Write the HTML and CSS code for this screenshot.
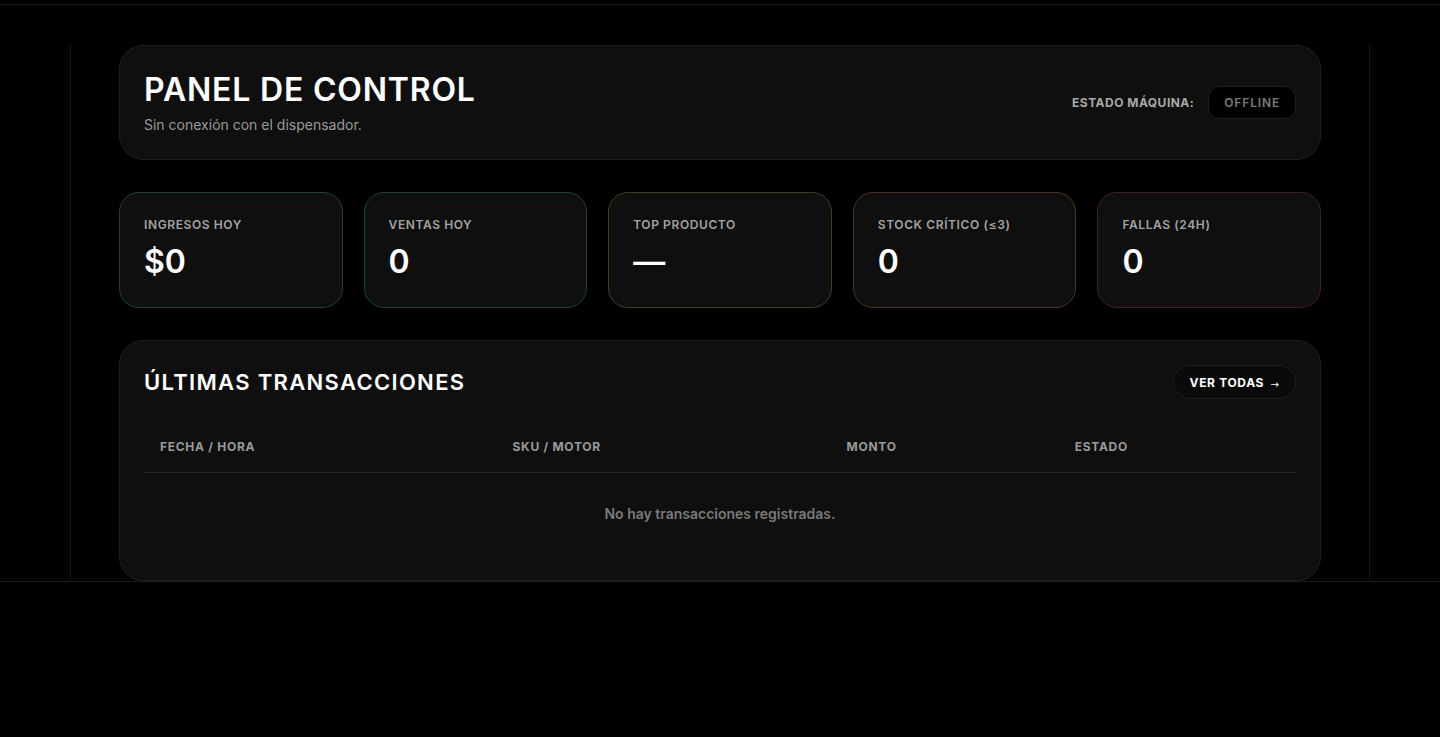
FILE: index.html
```html
<!DOCTYPE html>
<html lang="es">
<head>
<meta charset="utf-8">
<title>Panel de control</title>
<link rel="stylesheet" href="styles.css">
</head>
<body>
<div class="topbar"></div>
<main class="main">
  <section class="card head-card">
    <div class="head-text">
      <h1 class="title">PANEL DE CONTROL</h1>
      <p class="subtitle">Sin conexión con el dispensador.</p>
    </div>
    <div class="status">
      <span class="status-label">ESTADO MÁQUINA:</span>
      <span class="badge">OFFLINE</span>
    </div>
  </section>

  <section class="stats">
    <div class="stat stat-green">
      <div class="stat-label">INGRESOS HOY</div>
      <div class="stat-value">$0</div>
    </div>
    <div class="stat stat-green">
      <div class="stat-label">VENTAS HOY</div>
      <div class="stat-value">0</div>
    </div>
    <div class="stat stat-yellow">
      <div class="stat-label">TOP PRODUCTO</div>
      <div class="stat-value">—</div>
    </div>
    <div class="stat stat-orange">
      <div class="stat-label">STOCK CRÍTICO (≤3)</div>
      <div class="stat-value">0</div>
    </div>
    <div class="stat stat-red">
      <div class="stat-label">FALLAS (24H)</div>
      <div class="stat-value">0</div>
    </div>
  </section>

  <section class="card tx-card">
    <div class="tx-head">
      <h2 class="tx-title">ÚLTIMAS TRANSACCIONES</h2>
      <button class="btn">VER TODAS <span class="arrow">→</span></button>
    </div>
    <table class="table">
      <colgroup>
        <col class="c1"><col class="c2"><col class="c3"><col class="c4">
      </colgroup>
      <thead>
        <tr><th>FECHA / HORA</th><th>SKU / MOTOR</th><th>MONTO</th><th>ESTADO</th></tr>
      </thead>
      <tbody>
        <tr><td colspan="4" class="empty">No hay transacciones registradas.</td></tr>
      </tbody>
    </table>
  </section>
</main>
<div class="footer"></div>
</body>
</html>
```
FILE: styles.css
```css
* { box-sizing: border-box; }
html, body { margin: 0; padding: 0; background: #000; }
body {
  font-family: Inter, "Noto Sans", "Liberation Sans", sans-serif;
  color: #fff;
  min-height: 737px;
}
.topbar {
  height: 5px;
  border-bottom: 1px solid #1c1c1c;
}
.main {
  width: 1300px;
  margin: 40px auto 0;
  padding: 0 48px;
  border-left: 1px solid #161616;
  border-right: 1px solid #161616;
  display: flex;
  flex-direction: column;
  gap: 32px;
}
.card {
  background: #0f0f0f;
  border: 1px solid #1e1e1e;
  border-radius: 24px;
  padding: 24px;
}
.head-card {
  display: flex;
  align-items: center;
  justify-content: space-between;
}
.head-text {
  padding-top: 1px;
}
.title {
  margin: 0 0 6px;
  font-size: 32px;
  line-height: 38px;
  font-weight: 600;
  letter-spacing: 0.025em;
}
.subtitle {
  margin: 0;
  font-size: 14px;
  line-height: 20px;
  color: #9a9a9a;
}
.status {
  display: flex;
  align-items: center;
  gap: 14px;
}
.status-label {
  font-size: 12px;
  font-weight: 700;
  letter-spacing: 0.04em;
  color: #a8a8a8;
}
.badge {
  display: inline-flex;
  align-items: center;
  height: 33px;
  padding: 0 15px;
  background: #000;
  border: 1px solid #1e1e1e;
  border-radius: 12px;
  font-size: 12px;
  font-weight: 600;
  letter-spacing: 0.07em;
  color: #7a7a7a;
}
.stats {
  display: grid;
  grid-template-columns: repeat(5, 1fr);
  gap: 21px;
}
.stat {
  background: #0f0f0f;
  border: 1px solid #1e1e1e;
  border-radius: 20px;
  padding: 24px;
}
.stat-green { border-color: #18443a; }
.stat-yellow { border-color: #46401f; }
.stat-orange { border-color: #4a381c; }
.stat-red { border-color: #471d24; }
.stat-label {
  font-size: 12px;
  line-height: 16px;
  font-weight: 600;
  letter-spacing: 0.05em;
  color: #a3a3a3;
}
.stat-value {
  margin-top: 8px;
  font-size: 32px;
  line-height: 42px;
  font-weight: 600;
}
.tx-head {
  display: flex;
  align-items: center;
  justify-content: space-between;
  margin-bottom: 23px;
}
.tx-title {
  margin: 0;
  font-size: 22px;
  line-height: 30px;
  font-weight: 600;
  letter-spacing: 0.06em;
}
.btn {
  height: 34px;
  padding: 0 16px;
  background: #0a0a0a;
  border: 1px solid #1e1e1e;
  border-radius: 999px;
  color: #fff;
  font-family: inherit;
  font-size: 12px;
  font-weight: 700;
  letter-spacing: 0.055em;
}
.arrow {
  display: inline-block;
  margin-left: 3px;
  font-family: "DejaVu Sans", sans-serif;
  font-weight: 400;
  font-size: 10px;
  letter-spacing: 0;
  position: relative;
  top: 1px;
}
.table {
  width: 100%;
  border-collapse: collapse;
}
.c1 { width: 30.6%; }
.c2 { width: 29%; }
.c3 { width: 19.8%; }
.c4 { width: 20.6%; }
.table th {
  text-align: left;
  padding: 16px;
  font-size: 12px;
  line-height: 18px;
  font-weight: 700;
  letter-spacing: 0.06em;
  color: #9a9a9a;
  border-bottom: 1px solid #262626;
}
.table td.empty {
  text-align: center;
  padding: 31px 16px 32px;
  font-size: 14px;
  line-height: 20px;
  font-weight: 600;
  color: #7a7a7a;
}
.footer {
  border-top: 1px solid #1c1c1c;
}
```
